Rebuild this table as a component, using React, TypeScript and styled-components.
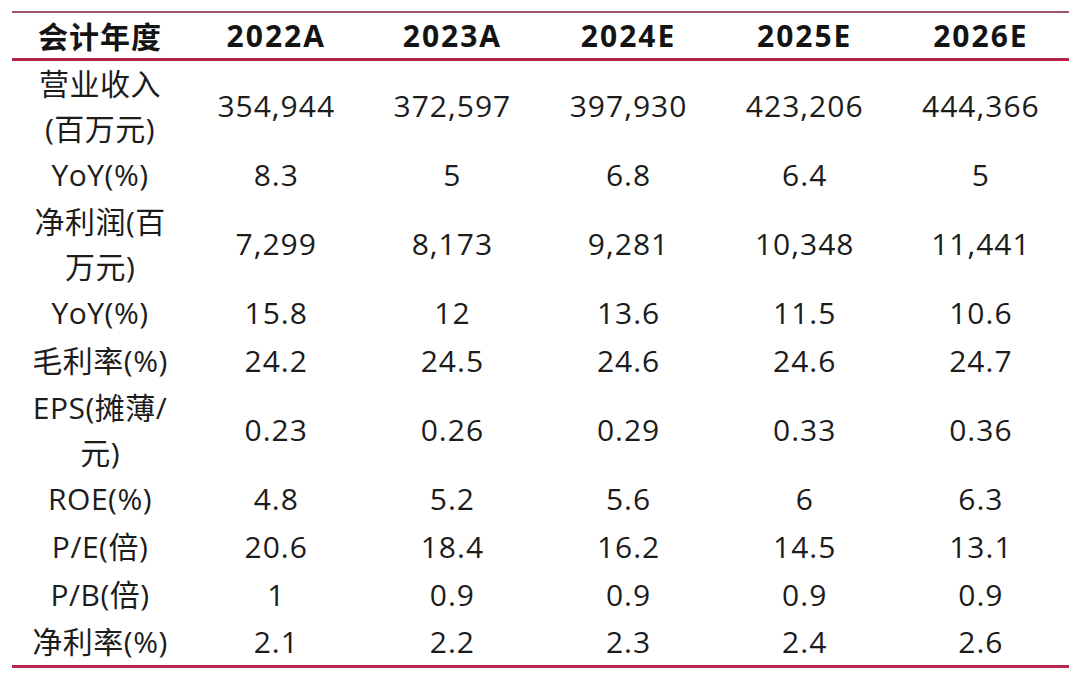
import styled, { createGlobalStyle } from 'styled-components'

const GlobalStyle = createGlobalStyle`
  html, body {
    margin: 0;
    padding: 0;
    background: #ffffff;
  }
  body {
    font-family: "Open Sans", "Noto Sans CJK SC", sans-serif;
    color: #1c1c1c;
  }
`

/* ── Layout ── */
const Page = styled.div`
  padding: 11px 11px 0 12px;
`

const Table = styled.table`
  width: 1057px;
  border-collapse: collapse;
  table-layout: fixed;
  border-top: 2px solid #9c5868;
  border-bottom: 3px solid #b62850;
`

const HeadRow = styled.tr`
  height: 47px;
  border-bottom: 3px solid #b4234a;
`

const HeadCell = styled.th<{ $latin?: boolean }>`
  font-family: "Open Sans", "Noto Sans CJK SC", sans-serif;
  font-size: 30px;
  font-weight: 700;
  letter-spacing: ${p => (p.$latin ? '2px' : '1px')};
  text-align: center;
  padding: 0;
  color: #141414;
`

const Row = styled.tr<{ $double: boolean }>`
  height: ${p => (p.$double ? '90px' : '48px')};
`

const LabelCell = styled.td`
  font-size: 30px;
  line-height: 45px;
  letter-spacing: 0.5px;
  text-align: center;
  padding: 0;
  white-space: nowrap;
`

const ValueCell = styled.td`
  font-size: 30px;
  letter-spacing: 1px;
  text-align: center;
  padding: 0;
`

type RowData = { label: string[]; values: string[] }

const years = ['2022A', '2023A', '2024E', '2025E', '2026E']

const rows: RowData[] = [
  { label: ['营业收入', '(百万元)'], values: ['354,944', '372,597', '397,930', '423,206', '444,366'] },
  { label: ['YoY(%)'], values: ['8.3', '5', '6.8', '6.4', '5'] },
  { label: ['净利润(百', '万元)'], values: ['7,299', '8,173', '9,281', '10,348', '11,441'] },
  { label: ['YoY(%)'], values: ['15.8', '12', '13.6', '11.5', '10.6'] },
  { label: ['毛利率(%)'], values: ['24.2', '24.5', '24.6', '24.6', '24.7'] },
  { label: ['EPS(摊薄/', '元)'], values: ['0.23', '0.26', '0.29', '0.33', '0.36'] },
  { label: ['ROE(%)'], values: ['4.8', '5.2', '5.6', '6', '6.3'] },
  { label: ['P/E(倍)'], values: ['20.6', '18.4', '16.2', '14.5', '13.1'] },
  { label: ['P/B(倍)'], values: ['1', '0.9', '0.9', '0.9', '0.9'] },
  { label: ['净利率(%)'], values: ['2.1', '2.2', '2.3', '2.4', '2.6'] },
]

export default function App() {
  return (
    <Page>
      <GlobalStyle />
      <Table>
        <colgroup>
          {[0, 1, 2, 3, 4, 5].map(i => (
            <col key={i} style={{ width: '176px' }} />
          ))}
        </colgroup>
        <thead>
          <HeadRow>
            <HeadCell>会计年度</HeadCell>
            {years.map(y => (
              <HeadCell key={y} $latin>{y}</HeadCell>
            ))}
          </HeadRow>
        </thead>
        <tbody>
          {rows.map((r, i) => (
            <Row key={i} $double={r.label.length > 1}>
              <LabelCell>
                {r.label.map((line, j) => (
                  <div key={j}>{line}</div>
                ))}
              </LabelCell>
              {r.values.map((v, j) => (
                <ValueCell key={j}>{v}</ValueCell>
              ))}
            </Row>
          ))}
        </tbody>
      </Table>
    </Page>
  )
}
